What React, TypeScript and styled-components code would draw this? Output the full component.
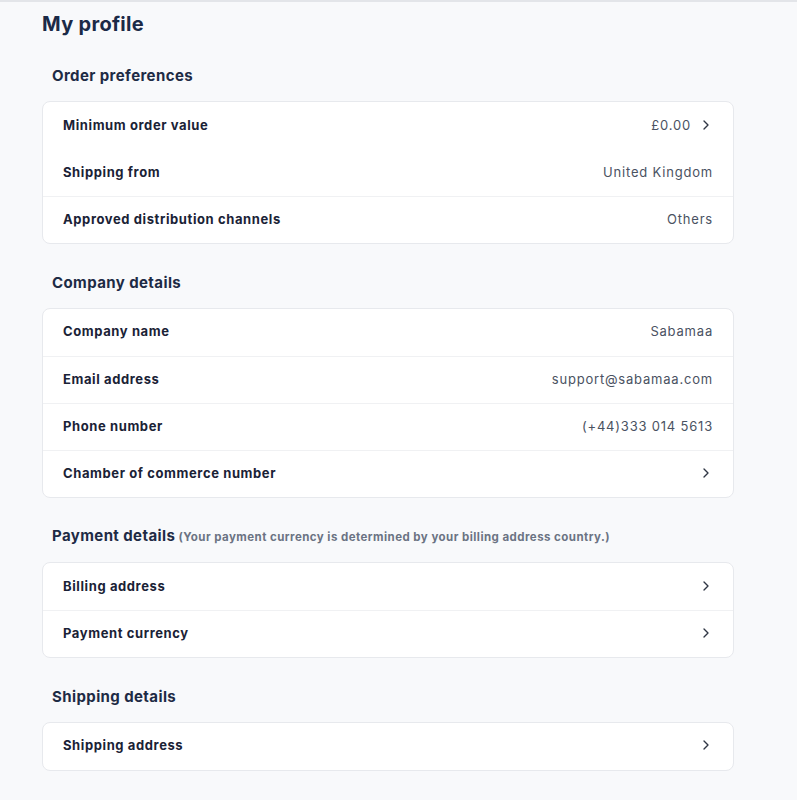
import React from "react";
import styled, { createGlobalStyle } from "styled-components";
import { ChevronRight } from "lucide-react";

interface row {
  label: string;
  value?: string;
  link?: boolean;
  divider?: boolean;
}
interface section {
  title: string;
  note?: string;
  rows: row[];
}

const SECTIONS: section[] = [
  {
    title: "Order preferences",
    rows: [
      { label: "Minimum order value", value: "£0.00", link: true, divider: false },
      { label: "Shipping from", value: "United Kingdom" },
      { label: "Approved distribution channels", value: "Others" },
    ],
  },
  {
    title: "Company details",
    rows: [
      { label: "Company name", value: "Sabamaa" },
      { label: "Email address", value: "support@sabamaa.com" },
      { label: "Phone number", value: "(+44)333 014 5613" },
      { label: "Chamber of commerce number", link: true },
    ],
  },
  {
    title: "Payment details",
    note: "(Your payment currency is determined by your billing address country.)",
    rows: [
      { label: "Billing address", link: true },
      { label: "Payment currency", link: true },
    ],
  },
  {
    title: "Shipping details",
    rows: [{ label: "Shipping address", link: true }],
  },
];

function App() {
  return (
    <>
      <GlobalStyle />
      <Page>
        <Title>My profile</Title>
        {SECTIONS.map((section) => (
          <Section key={section.title}>
            <Heading>
              {section.title}
              {section.note && <Note> {section.note}</Note>}
            </Heading>
            <Card>
              {section.rows.map((item, index) => (
                <Row
                  key={item.label}
                  $divider={index > 0 && (section.rows[index - 1].divider ?? true)}
                >
                  <Label>{item.label}</Label>
                  <Value>
                    {item.value}
                    {item.link && (
                      <Chevron>
                        <ChevronRight size={16} strokeWidth={2} />
                      </Chevron>
                    )}
                  </Value>
                </Row>
              ))}
            </Card>
          </Section>
        ))}
      </Page>
    </>
  );
}

const GlobalStyle = createGlobalStyle`
  html, body {
    margin: 0;
    padding: 0;
    background: #f8f9fb;
    font-family: Inter, "Open Sans", "Liberation Sans", sans-serif;
  }
`;
const Page = styled.div`
  min-height: 800px;
  box-sizing: border-box;
  border-top: 2px solid #e3e5e9;
  padding: 10px 63px 30px 42px;
  display: flex;
  flex-direction: column;
`;
const Title = styled.h1`
  margin: 0;
  font-size: 20px;
  line-height: 24px;
  font-weight: 700;
  color: #1b2a47;
  letter-spacing: 0.3px;
`;
const Section = styled.section`
  display: flex;
  flex-direction: column;
  margin-top: 28.5px;
  &:first-of-type {
    margin-top: 30px;
  }
`;
const Heading = styled.h2`
  margin: 0 0 15px 10px;
  font-size: 15px;
  line-height: 20px;
  font-weight: 700;
  color: #1e2b45;
  letter-spacing: 0.4px;
`;
const Note = styled.span`
  font-size: 11.5px;
  font-weight: 700;
  color: #6b7383;
  letter-spacing: 0.45px;
`;
const Card = styled.div`
  background: #fff;
  border: 1px solid #e7e9ed;
  border-radius: 8px;
  display: flex;
  flex-direction: column;
`;
const Row = styled.div<{ $divider: boolean }>`
  height: 47px;
  box-sizing: border-box;
  padding: 0 20px;
  display: flex;
  align-items: center;
  justify-content: space-between;
  border-top: 1px solid ${(props) => (props.$divider ? "#f0f1f3" : "transparent")};
  &:first-child {
    border-top: none;
  }
`;
const Label = styled.span`
  font-size: 13px;
  font-weight: 700;
  color: #1a2236;
  letter-spacing: 0.6px;
  margin-top: -2px;
`;
const Value = styled.span`
  display: flex;
  align-items: center;
  gap: 7px;
  font-size: 13px;
  color: #4a5262;
  letter-spacing: 0.8px;
  margin-top: -2px;
`;
const Chevron = styled.span`
  display: flex;
  color: #2f3644;
  margin-right: -1px;
`;

export default App;
